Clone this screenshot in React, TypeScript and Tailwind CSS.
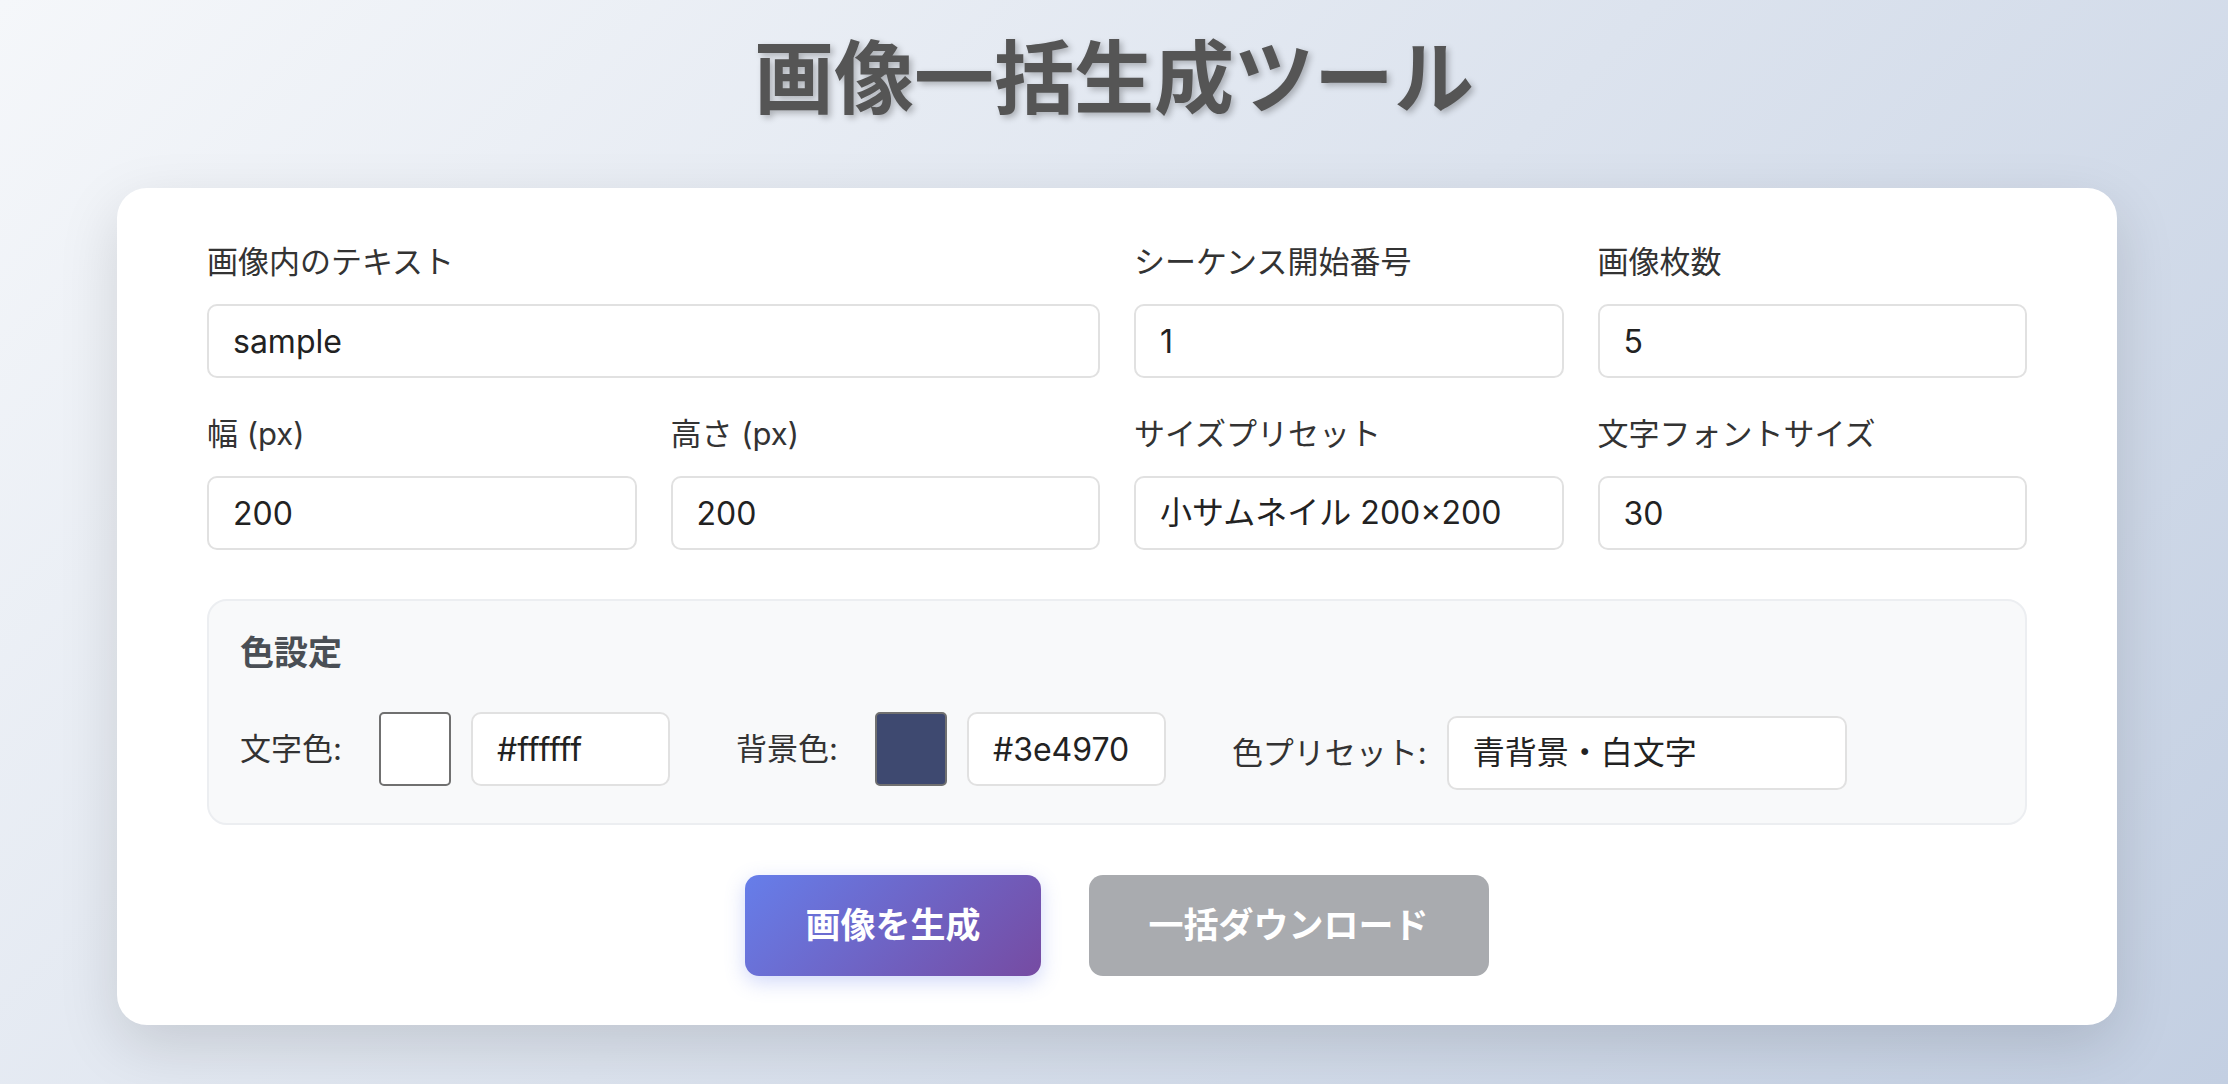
import { useState } from 'react'

const FONT = 'font-["Inter","Noto_Sans_CJK_JP",sans-serif]'

const SIZE_PRESETS = ['小サムネイル 200×200', '中サムネイル 400×400', 'バナー 728×90', 'カスタム']
const COLOR_PRESETS = ['青背景・白文字', '白背景・黒文字', '黒背景・白文字']

function Field({ label, children, className = '' }: { label: string; children: React.ReactNode; className?: string }) {
  return (
    <div className={`flex flex-col ${className}`}>
      <label className="text-[31px] leading-[43px] text-[#333] mb-[21px]">{label}</label>
      {children}
    </div>
  )
}

const inputClass =
  'h-[74px] w-full rounded-[10px] border-2 border-[#e1e1e1] bg-white px-[24px] text-[32px] text-[#222] outline-none'

export default function App() {
  const [text, setText] = useState('sample')
  const [start, setStart] = useState('1')
  const [count, setCount] = useState('5')
  const [width, setWidth] = useState('200')
  const [height, setHeight] = useState('200')
  const [fontSize, setFontSize] = useState('30')
  const [textColor, setTextColor] = useState('#ffffff')
  const [bgColor, setBgColor] = useState('#3e4970')

  return (
    <div className={`min-h-screen bg-[linear-gradient(135deg,#f5f7fa_0%,#c3cfe2_100%)] pt-[30px] pb-[60px] ${FONT}`}>
      <h1 className="text-center text-[80px] leading-[96px] font-bold text-[#555] [text-shadow:3px_3px_6px_rgba(0,0,0,0.25)]">
        画像一括生成ツール
      </h1>

      <div className="mt-[62px] ml-[117px] w-[2000px] rounded-[30px] bg-white px-[90px] pt-[52px] pb-[49px] shadow-[0_20px_60px_rgba(0,0,0,0.13)]">
        {/* Basic settings */}
        <div className="grid grid-cols-4 gap-[34px]">
          <Field label="画像内のテキスト" className="col-span-2">
            <input className={inputClass} value={text} onChange={(e) => setText(e.target.value)} />
          </Field>
          <Field label="シーケンス開始番号">
            <input className={inputClass} value={start} onChange={(e) => setStart(e.target.value)} />
          </Field>
          <Field label="画像枚数">
            <input className={inputClass} value={count} onChange={(e) => setCount(e.target.value)} />
          </Field>

          <Field label="幅 (px)">
            <input className={inputClass} value={width} onChange={(e) => setWidth(e.target.value)} />
          </Field>
          <Field label="高さ (px)">
            <input className={inputClass} value={height} onChange={(e) => setHeight(e.target.value)} />
          </Field>
          <Field label="サイズプリセット">
            <select className={`${inputClass} appearance-none`} defaultValue={SIZE_PRESETS[0]}>
              {SIZE_PRESETS.map((p) => (
                <option key={p}>{p}</option>
              ))}
            </select>
          </Field>
          <Field label="文字フォントサイズ">
            <input className={inputClass} value={fontSize} onChange={(e) => setFontSize(e.target.value)} />
          </Field>
        </div>

        {/* Color settings */}
        <div className="mt-[49px] rounded-[20px] border-2 border-[#eceef1] bg-[#f8f9fa] px-[31px] pt-[28px] pb-[33px]">
          <h3 className="text-[34px] leading-[48px] font-bold text-[#4a4f55]">色設定</h3>
          <div className="mt-[31px] flex items-center gap-[66px]">
            <div className="flex items-center gap-[20px]">
              <span className="mr-[17px] text-[31px] text-[#333]">文字色:</span>
              <div className="h-[74px] w-[72px] rounded-[5px] border-2 border-[#707070]" style={{ backgroundColor: textColor }} />
              <input
                className="h-[74px] w-[199px] rounded-[10px] border-2 border-[#e1e1e1] bg-white px-[24px] text-[32px] text-[#222] outline-none"
                value={textColor}
                onChange={(e) => setTextColor(e.target.value)}
              />
            </div>
            <div className="flex items-center gap-[20px]">
              <span className="mr-[17px] text-[31px] text-[#333]">背景色:</span>
              <div className="h-[74px] w-[72px] rounded-[5px] border-2 border-[#707070]" style={{ backgroundColor: bgColor }} />
              <input
                className="h-[74px] w-[199px] rounded-[10px] border-2 border-[#e1e1e1] bg-white px-[24px] text-[32px] text-[#222] outline-none"
                value={bgColor}
                onChange={(e) => setBgColor(e.target.value)}
              />
            </div>
            <div className="flex items-center gap-[20px] pt-[8px]">
              <span className="text-[31px] text-[#333]">色プリセット:</span>
              <select
                className="h-[74px] w-[400px] appearance-none rounded-[10px] border-2 border-[#e1e1e1] bg-white px-[24px] text-[32px] text-[#222] outline-none"
                defaultValue={COLOR_PRESETS[0]}
              >
                {COLOR_PRESETS.map((p) => (
                  <option key={p}>{p}</option>
                ))}
              </select>
            </div>
          </div>
        </div>

        {/* Actions */}
        <div className="mt-[50px] flex justify-center gap-[48px]">
          <button className="h-[101px] rounded-[14px] bg-[linear-gradient(135deg,#667eea_0%,#764ba2_100%)] px-[60px] text-[35px] font-bold text-white shadow-[0_6px_20px_rgba(102,126,234,0.3)]">
            画像を生成
          </button>
          <button disabled className="h-[101px] rounded-[14px] bg-[#a9abaf] px-[60px] text-[35px] font-bold text-white">
            一括ダウンロード
          </button>
        </div>
      </div>
    </div>
  )
}
